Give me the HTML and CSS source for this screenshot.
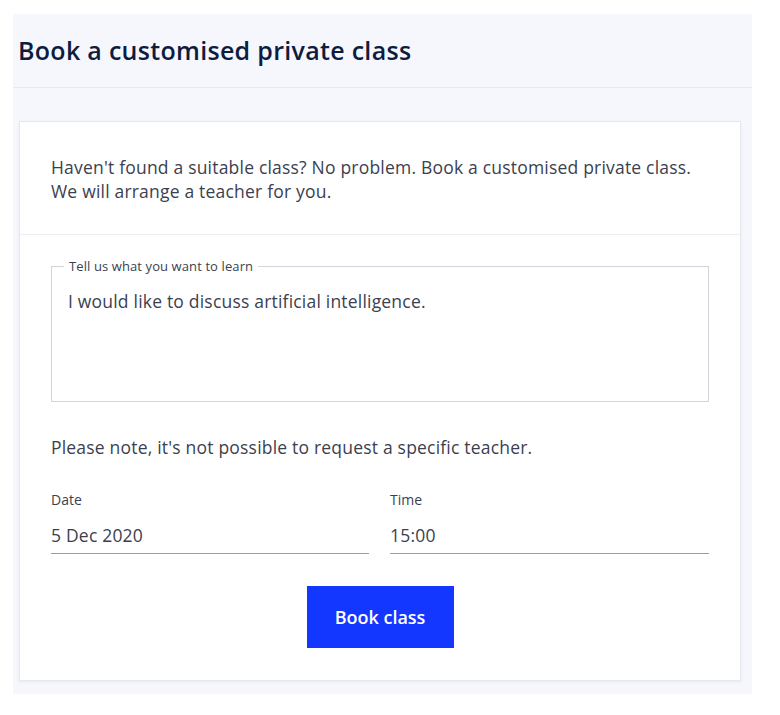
FILE: index.html
```html
<!DOCTYPE html>
<html lang="en">
<head>
<meta charset="utf-8">
<title>Book a customised private class</title>
<link rel="stylesheet" href="styles.css">
</head>
<body>
<div class="panel">
  <header class="panel-header">
    <h1 class="title">Book a customised private class</h1>
  </header>
  <section class="card">
    <div class="intro">
      <p>Haven't found a suitable class? No problem. Book a customised private class.<br>We will arrange a teacher for you.</p>
    </div>
    <div class="form">
      <fieldset class="learn">
        <legend class="learn-label">Tell us what you want to learn</legend>
        <div class="learn-value">I would like to discuss artificial intelligence.</div>
      </fieldset>
      <p class="note">Please note, it's not possible to request a specific teacher.</p>
      <div class="fields">
        <div class="field">
          <div class="field-label">Date</div>
          <div class="field-value">5 Dec 2020</div>
        </div>
        <div class="field">
          <div class="field-label">Time</div>
          <div class="field-value">15:00</div>
        </div>
      </div>
      <div class="actions">
        <button class="book-btn" type="button">Book class</button>
      </div>
    </div>
  </section>
</div>
</body>
</html>
```
FILE: styles.css
```css
* { box-sizing: border-box; }
html, body { margin: 0; padding: 0; background: #ffffff; }
body {
  font-family: "Open Sans", "Noto Sans", "Liberation Sans", sans-serif;
  color: #3b3f50;
}
.panel {
  margin: 14px 0 0 13px;
  width: 739px;
  background: #f6f7fc;
  padding-bottom: 13px;
}
.panel-header {
  height: 74px;
  border-bottom: 1px solid #e6e8f0;
  padding: 19px 0 0 5px;
}
.title {
  margin: 0;
  font-size: 25px;
  line-height: 34px;
  letter-spacing: 0.3px;
  font-weight: 600;
  color: #0d1c40;
}
.card {
  margin: 33px 11px 0 6px;
  background: #ffffff;
  border: 1px solid #e6e8ef;
  box-shadow: 0 1px 3px rgba(30, 40, 80, 0.06);
}
.intro {
  padding: 33px 31px 31px 31px;
  border-bottom: 1px solid #eceef3;
}
.intro p {
  margin: 0;
  font-size: 17.5px;
  line-height: 24px;
  letter-spacing: 0.2px;
}
.form {
  padding: 23px 31px 32px 31px;
}
.learn {
  margin: 0;
  padding: 0 16px;
  border: 1px solid #d3d5dc;
  height: 144px;
}
.learn-label {
  margin-left: -4px;
  padding: 0 5px;
  font-size: 13px;
  line-height: 16px;
  letter-spacing: 0.1px;
  color: #3b3f50;
}
.learn-value {
  padding-top: 15px;
  font-size: 17.5px;
  line-height: 24px;
  letter-spacing: 0.2px;
}
.note {
  margin: 33px 0 0 0;
  font-size: 17.5px;
  line-height: 24px;
  letter-spacing: 0.2px;
}
.fields {
  margin-top: 32px;
  display: grid;
  grid-template-columns: 318px 319px;
  column-gap: 21px;
}
.field-label {
  font-size: 14px;
  line-height: 18px;
}
.field-value {
  margin-top: 14px;
  padding-bottom: 6px;
  font-size: 17.5px;
  line-height: 24px;
  letter-spacing: 0.2px;
  border-bottom: 1px solid #9a9ca4;
}
.actions {
  margin-top: 32px;
  display: flex;
  justify-content: center;
}
.book-btn {
  width: 147px;
  height: 62px;
  border: 0;
  background: #1437ff;
  color: #ffffff;
  font-family: "Open Sans", "Noto Sans", "Liberation Sans", sans-serif;
  font-size: 18px;
  font-weight: 600;
  cursor: pointer;
}
```
